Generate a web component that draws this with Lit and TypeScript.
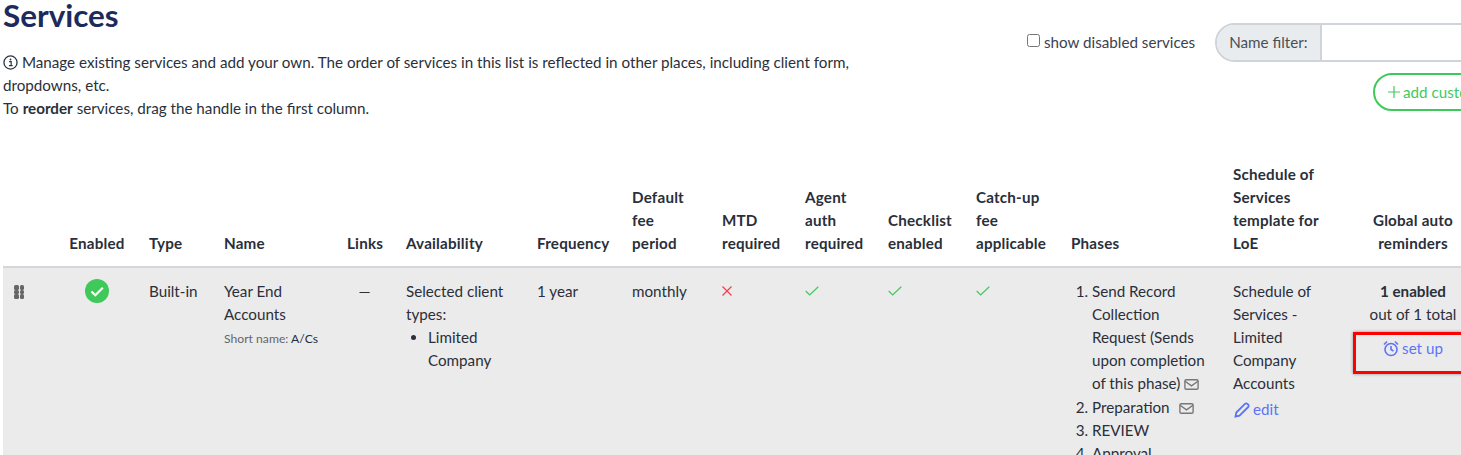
import { LitElement, html, css } from "lit";
import { customElement } from "lit/decorators.js";

const envelope = html`<svg class="env" viewBox="0 0 16 12" width="15" height="11"><rect x="0.8" y="0.8" width="14.4" height="10.4" rx="1.5" fill="none" stroke="currentColor" stroke-width="1.5"/><path d="M1 2.5 L8 7.5 L15 2.5" fill="none" stroke="currentColor" stroke-width="1.5"/></svg>`;
const check = html`<svg class="mark" viewBox="0 0 14 10" width="14" height="10"><path d="M0.7 5 L4.7 9 L13.3 0.7" fill="none" stroke="#3fc95b" stroke-width="1.2"/></svg>`;
const cross = html`<svg class="mark" viewBox="0 0 10 10" width="10" height="10"><path d="M0.5 0.5 L9.5 9.5 M9.5 0.5 L0.5 9.5" fill="none" stroke="#f0404a" stroke-width="1.2"/></svg>`;

const headers = [
  "", "Enabled", "Type", "Name", "Links", "Availability", "Frequency", "Default fee period",
  "MTD required", "Agent auth required", "Checklist enabled", "Catch-up fee applicable", "Phases",
  "Schedule of Services template for LoE", "Global auto reminders",
];

@customElement("app-root")
export class AppRoot extends LitElement {
  static styles = css`
    :host {
      display: block;
      width: 1461px;
      height: 455px;
      overflow: hidden;
      background: #fff;
      font-family: Lato, sans-serif;
      font-size: 15.2px;
      line-height: 23px;
      color: #2a2f3a;
    }
    .page { width: 1620px; padding-left: 3px; }
    .top { display: flex; height: 161px; }
    .intro { width: 860px; flex: none; }
    h1 {
      margin: 0;
      height: 44px;
      font-size: 31.4px;
      line-height: 31px;
      font-weight: 700;
      color: #1c2a5c;
    }
    .intro p { margin: 7px 0 0; }
    .info { vertical-align: -2px; margin-right: 0; }
    .controls { margin-left: 164px; padding-top: 23px; flex: none; }
    .filter-row { display: flex; align-items: center; }
    .show { display: flex; align-items: center; color: #3a4150; margin-right: 20px; }
    .show input { margin: 0 4px 4px 0; width: 13px; height: 13px; }
    .filter { display: flex; width: 400px; height: 39px; box-sizing: border-box; border: 2px solid #ced4da; border-radius: 20px 0 0 20px; }
    .filter span { display: flex; align-items: center; padding: 0 12px; background: #e9ecef; border-right: 2px solid #ced4da; border-radius: 18px 0 0 18px; color: #495057; }
    .add { display: flex; margin: 11px 0 0 346px; width: 200px; height: 38px; box-sizing: border-box; border: 2px solid #3fc95b; border-radius: 19px; color: #3fc95b; padding: 0 12px 0 13px; align-items: center; white-space: nowrap; }
    .add svg { margin-right: 3px; }
    .table { display: grid; grid-template-columns: 54px 80px 75px 123px 59px 131px 95px 90px 83px 83px 88px 95px 162px 140px 104px; }
    .th {
      display: flex;
      align-items: flex-end;
      padding: 0 12px 11px 12px;
      font-weight: 700;
      letter-spacing: 0.2px;
      border-bottom: 2px solid #d3d7dc;
      box-sizing: border-box;
      height: 107px;
    }
    .td { background: #ebebeb; padding: 12px 12px 0; height: 188px; box-sizing: border-box; }
    .th.narrow, .td.narrow { padding-right: 34px; }
    .th.reminders { padding-left: 0; padding-right: 0; }
    .center { text-align: center; justify-content: center; }
    .grip { display: grid; grid-template-columns: 4.5px 4.5px; column-gap: 1px; padding-top: 5px; width: 10px; margin-left: -1px; }
    .grip i { width: 4.5px; height: 4.5px; border-radius: 1.5px; background: #666; }
    .ok { display: block; margin: -1px auto 0; }
    .short { font-size: 12.16px; line-height: 25px; color: #666; }
    .short b { font-weight: 400; color: #2a2f3a; }
    ul, ol { margin: 0; padding: 0 0 0 22px; }
    ol { padding-left: 21px; }
    ol li:first-child { padding-bottom: 1px; }
    .mark { display: block; margin-top: 6px; }
    .env { color: #777; vertical-align: -1px; }
    .spaced { margin-left: 2px; }
    a { color: #5b73f8; text-decoration: none; }
    .edit { display: block; margin-top: 3px; }
    .edit svg { vertical-align: -3px; margin-right: 3px; margin-left: 1px; }
    .remind { text-align: center; position: relative; padding-left: 0; padding-right: 0; }
    .setup { display: block; margin-top: 11px; }
    .setup svg { vertical-align: -3px; margin-right: 3px; }
    .hl { position: absolute; left: -8px; top: 64px; width: 130px; height: 42px; box-sizing: border-box; border: 3px solid #f00; box-shadow: 0 0 3px rgba(0,0,0,.4); }
  `;

  render() {
    return html`<div class="page">
      <div class="top">
        <div class="intro">
          <h1>Services</h1>
          <p>
            <svg class="info" width="15" height="15" viewBox="0 0 16 16"><circle cx="8" cy="8" r="7" fill="none" stroke="#2b3446" stroke-width="1.4"/><circle cx="8" cy="4.8" r="1" fill="#2b3446"/><path d="M6.5 7h2.2v4.2M6.3 11.4h4" fill="none" stroke="#2b3446" stroke-width="1.3"/></svg>
            Manage existing services and add your own. The order of services in this list is reflected in other places, including client form, dropdowns, etc.<br />To <b>reorder</b> services, drag the handle in the first column.
          </p>
        </div>
        <div class="controls">
          <div class="filter-row">
            <label class="show"><input type="checkbox" />show disabled services</label>
            <div class="filter"><span>Name filter:</span></div>
          </div>
          <div class="add">
            <svg width="12" height="12" viewBox="0 0 12 12"><path d="M6 0v12M0 6h12" stroke="#3fc95b" stroke-width="1.2"/></svg>
            add custom service
          </div>
        </div>
      </div>
      <div class="table">
        ${headers.map((h, i) => {
          const cls = i === 1 ? "center" : i === 13 ? "narrow" : i === 14 ? "center reminders" : "";
          return html`<div class="th ${cls}">${h}</div>`;
        })}
        <div class="td"><div class="grip">${[0, 1, 2, 3, 4, 5].map(() => html`<i></i>`)}</div></div>
        <div class="td">
          <svg class="ok" width="24" height="24" viewBox="0 0 24 24"><circle cx="12" cy="12" r="12" fill="#3fc95b"/><path d="M6.5 12.5l3.8 3.8 7.5-7.5" fill="none" stroke="#fff" stroke-width="2.2"/></svg>
        </div>
        <div class="td">Built-in</div>
        <div class="td">Year End Accounts<div class="short">Short name: <b>A/Cs</b></div></div>
        <div class="td center">—</div>
        <div class="td">Selected client types:<ul><li>Limited Company</li></ul></div>
        <div class="td">1 year</div>
        <div class="td">monthly</div>
        <div class="td">${cross}</div>
        <div class="td">${check}</div>
        <div class="td">${check}</div>
        <div class="td">${check}</div>
        <div class="td">
          <ol>
            <li>Send Record Collection Request (Sends upon completion of this phase) ${envelope}</li>
            <li>Preparation &nbsp;<span class="spaced">${envelope}</span></li>
            <li>REVIEW</li>
            <li>Approval</li>
          </ol>
        </div>
        <div class="td narrow">Schedule of Services - Limited Company Accounts
          <a class="edit" href="#"><svg width="16" height="16" viewBox="0 0 16 16"><path d="M1.5 14.5l.8-4L11 1.8a1.6 1.6 0 0 1 2.3 0l.9.9a1.6 1.6 0 0 1 0 2.3L5.5 13.7z" fill="none" stroke="#5b73f8" stroke-width="1.8"/></svg>edit</a>
        </div>
        <div class="td remind">
          <b>1 enabled</b><br />out of 1 total
          <a class="setup" href="#"><svg width="16" height="17" viewBox="0 0 16 16"><circle cx="8" cy="9" r="6" fill="none" stroke="#5b73f8" stroke-width="1.6"/><path d="M8 5.5V9l2.5 1.5M1 4l3-3M15 4l-3-3" fill="none" stroke="#5b73f8" stroke-width="1.6"/></svg>set up</a>
          <div class="hl"></div>
        </div>
      </div>
    </div>`;
  }
}
